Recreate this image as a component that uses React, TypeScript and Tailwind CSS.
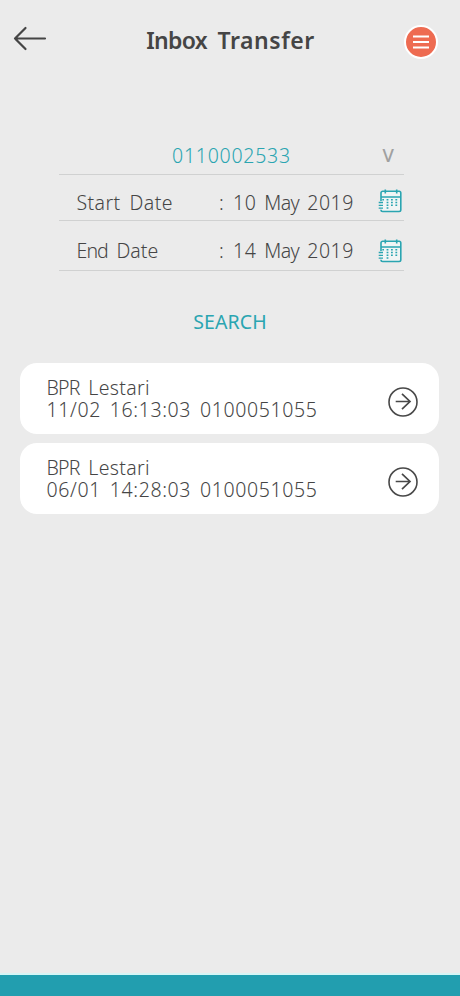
import React from "react";

function CalendarIcon() {
  return (
    <svg width="24" height="24" viewBox="0 0 24 24" fill="none" stroke="#2aa5b1" strokeWidth="1.6">
      <path
        d="M3 12V4a1.700 1.700 0 0 1 1.700-1.700h16.400a1.700 1.700 0 0 1 1.700 1.700v16.800a1.700 1.700 0 0 1-1.700 1.700H4.700a1.700 1.700 0 0 1-1.700-1.700"
        fill="#f1f5f5"
      />
      <path d="M3 8h19.800M7.300 0.500v4M18.700 0.500v4" />
      <path d="M0.700 13.500h4.300M0.700 16.300h4.300M0.700 19.100h4.300" strokeWidth="1.3" />
      <path
        d="M4.300 10.800h1.700M8.600 10.800h1.800M13 10.800h1.800M17.400 10.800h1.800M8.600 13.500h1.800M13 13.500h1.800M17.400 13.500h1.800M8.600 16.300h1.800M13 16.300h1.800M17.400 16.300h1.800M8.600 19.100h1.800"
        strokeWidth="1.5"
      />
    </svg>
  );
}

function ArrowCircle() {
  return (
    <svg width="32" height="32" viewBox="0 0 32 32" fill="none" stroke="#484848" strokeWidth="1.6">
      <circle cx="16" cy="16" r="14" />
      <path d="M8.700 15.500h14.300M15 7.800l8 7.700-8 7.700" strokeWidth="1.7" />
    </svg>
  );
}

function DateRow({ label, day, year, className, iconClass }: { label: React.ReactNode; day: string; year: string; className: string; iconClass: string }) {
  return (
    <div className={`flex items-start border-b border-[#d0d1d1] pl-[17.5px] pr-[2px] ${className}`}>
      <span className="w-[142.5px] [word-spacing:3.5px]">{label}</span>
      <span className="w-[14px]">:</span>
      <span className="flex-1 whitespace-nowrap tracking-[0.5px] [word-spacing:2.5px]">
        {day} <span className="tracking-[-0.6px]">May</span> {year}
      </span>
      <span className={iconClass}>
        <CalendarIcon />
      </span>
    </div>
  );
}

function Transfer({ detail }: { detail: string }) {
  return (
    <li className="flex h-[71px] items-center justify-between rounded-[17px] bg-white pl-[26.5px] pr-[20px]">
      <div className="whitespace-nowrap leading-[22px] [word-spacing:3.2px]">
        <div className="tracking-[0.35px]">
          <span className="tracking-[-0.8px]">BPR</span> Lestari
        </div>
        <div className="tracking-[0.62px]">{detail}</div>
      </div>
      <div className="pt-[7px]">
        <ArrowCircle />
      </div>
    </li>
  );
}

export default function App() {
  return (
    <main className="flex h-[996px] w-[460px] flex-col overflow-hidden bg-[#ebebeb] font-['Noto_Sans',sans-serif] text-[19.5px] font-[350] leading-[24px] text-[#454545]">
      <header className="flex h-[80px] items-start justify-between pl-[13px] pr-[22px]">
        <button className="mt-[26px]" aria-label="Back">
          <svg width="34" height="25" viewBox="0 0 34 25" fill="none" stroke="#454545" strokeWidth="2.2" strokeLinecap="round" strokeLinejoin="round">
            <path d="M32 12.5H2M12.5 2 2 12.5 12.5 23" />
          </svg>
        </button>
        <h1 className="mt-[26px] whitespace-nowrap pl-[10px] text-[23px] font-semibold leading-[28px] tracking-[0.55px] [word-spacing:4px]">
          <span className="tracking-[-0.7px]">Inbox</span> Transfer
        </h1>
        <button className="mt-[25px] flex h-[34px] w-[34px] items-center justify-center rounded-full border-[2.5px] border-white bg-[#ee6b51]" aria-label="Menu">
          <svg width="18" height="16" viewBox="0 0 18 16" stroke="#fff" strokeWidth="1.8">
            <path d="M1 2.5h16M1 8h16M1 13.5h16" />
          </svg>
        </button>
      </header>
      <section className="ml-[59px] flex w-[345px] flex-col pt-[63px]">
        <div className="flex h-[32px] border-b border-[#d0d1d1] pr-[10px]">
          <span className="flex-1 pl-[113px] pt-px tracking-[0.75px] text-[#2aa5b1]">0110002533</span>
          <span className="text-[18.5px] font-medium leading-[23px] text-[#a0a0a0]">V</span>
        </div>
        <DateRow
          label={<span className="tracking-[0.4px]">Start Date</span>}
          day="10"
          year="2019"
          className="h-[46px] pt-[16px]"
          iconClass="-mt-[2px]"
        />
        <DateRow
          label={<><span className="tracking-[-0.9px]">End</span> <span>Date</span></>}
          day="14"
          year="2019"
          className="h-[50px] pt-[18px]"
          iconClass=""
        />
      </section>
      <button className="mt-[39px] self-center text-[19.5px] font-[450] leading-[24px] tracking-[0.1px] text-[#2aa5b1]">SEARCH</button>
      <ul className="ml-[20px] mr-[21px] mt-[29px] flex flex-col gap-[9px]">
        <Transfer detail="11/02 16:13:03 0100051055" />
        <Transfer detail="06/01 14:28:03 0100051055" />
      </ul>
      <footer className="mt-auto h-[23px] border-t-2 border-[#d5f5f5] bg-[#229eaf]" />
    </main>
  );
}
